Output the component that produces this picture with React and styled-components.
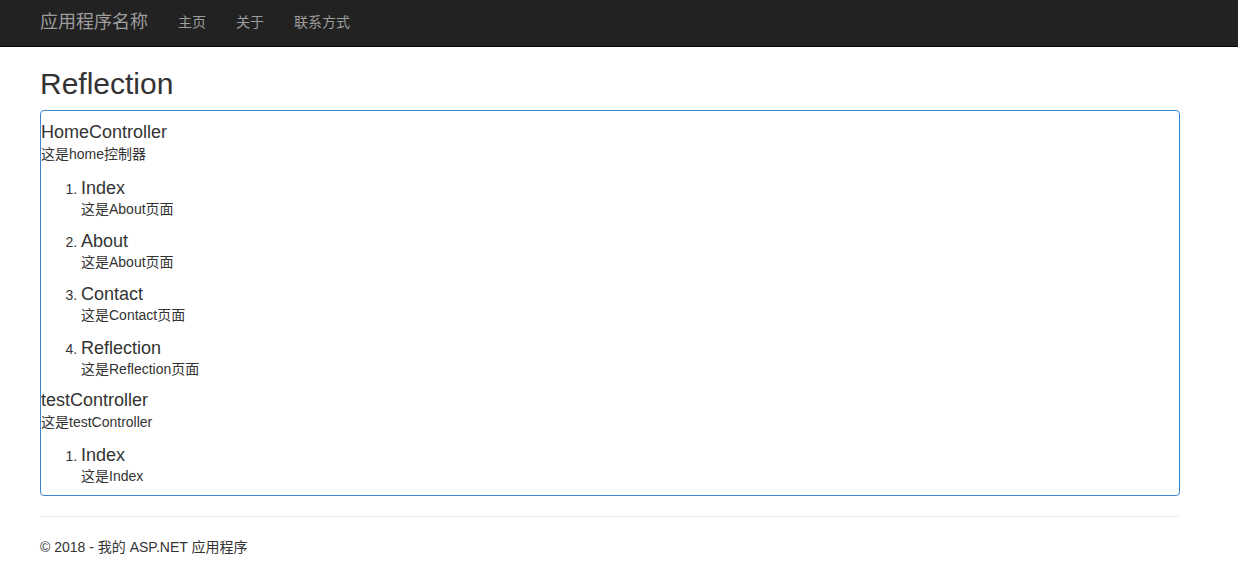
import styled, { createGlobalStyle } from "styled-components";

const GlobalStyle = createGlobalStyle`
  html, body {
    margin: 0;
    padding: 0;
    background: #fff;
  }
  body {
    font-family: "Liberation Sans", Arial, "Noto Sans CJK SC", sans-serif;
    font-size: 14px;
    line-height: 20px;
    color: #333;
  }
`;

const Navbar = styled.nav`
  height: 46px;
  background-color: #222;
  border-bottom: 1px solid #080808;
`;

const NavInner = styled.div`
  width: 1140px;
  margin-left: 40px;
  display: flex;
  align-items: center;
  height: 100%;
`;

const Brand = styled.a`
  font-size: 18px;
  line-height: 20px;
  color: #9d9d9d;
  text-decoration: none;
  padding-right: 15px;
  margin-top: -3px;
`;

const NavLink = styled.a`
  font-size: 14px;
  line-height: 20px;
  color: #9d9d9d;
  text-decoration: none;
  padding: 0 15px;
  margin-top: -3px;
`;

const Container = styled.div`
  width: 1140px;
  margin-left: 40px;
`;

const PageTitle = styled.h2`
  font-size: 30px;
  font-weight: normal;
  line-height: 33px;
  margin: 20px 0 10px;
`;

const Panel = styled.div`
  border: 1px solid #3d87d0;
  border-radius: 4px;
  padding-bottom: 9px;
`;

const ControllerName = styled.div`
  font-size: 18px;
  line-height: 22px;
  margin-top: 10px;
`;

const Desc = styled.div`
  font-size: 14px;
  line-height: 20px;
  margin-top: ${(p) => (p.$tight ? "0" : "1px")};
`;

const ActionList = styled.ol`
  margin: 0;
  padding-left: 40px;
`;

const ActionItem = styled.li`
  margin-top: ${(p) => (p.$first ? "12.5px" : "11.4px")};
  font-size: 14px;
`;

const ActionName = styled.div`
  font-size: 18px;
  line-height: 22px;
`;

const Rule = styled.hr`
  border: 0;
  border-top: 1px solid #eee;
  margin: 20px 0;
`;

const Footer = styled.footer`
  font-size: 14px;
  line-height: 20px;
`;

const controllers = [
  {
    name: "HomeController",
    desc: "这是home控制器",
    actions: [
      ["Index", "这是About页面"],
      ["About", "这是About页面"],
      ["Contact", "这是Contact页面"],
      ["Reflection", "这是Reflection页面"],
    ],
  },
  {
    name: "testController",
    desc: "这是testController",
    actions: [["Index", "这是Index"]],
  },
];

export default function App() {
  return (
    <>
      <GlobalStyle />
      <Navbar>
        <NavInner>
          <Brand href="#">应用程序名称</Brand>
          <NavLink href="#">主页</NavLink>
          <NavLink href="#">关于</NavLink>
          <NavLink href="#">联系方式</NavLink>
        </NavInner>
      </Navbar>
      <Container>
        <PageTitle>Reflection</PageTitle>
        <Panel>
          {controllers.map((c) => (
            <div key={c.name}>
              <ControllerName>{c.name}</ControllerName>
              <Desc>{c.desc}</Desc>
              <ActionList>
                {c.actions.map(([name, desc], i) => (
                  <ActionItem key={name} $first={i === 0}>
                    <ActionName>{name}</ActionName>
                    <Desc $tight>{desc}</Desc>
                  </ActionItem>
                ))}
              </ActionList>
            </div>
          ))}
        </Panel>
        <Rule />
        <Footer>© 2018 - 我的 ASP.NET 应用程序</Footer>
      </Container>
    </>
  );
}
